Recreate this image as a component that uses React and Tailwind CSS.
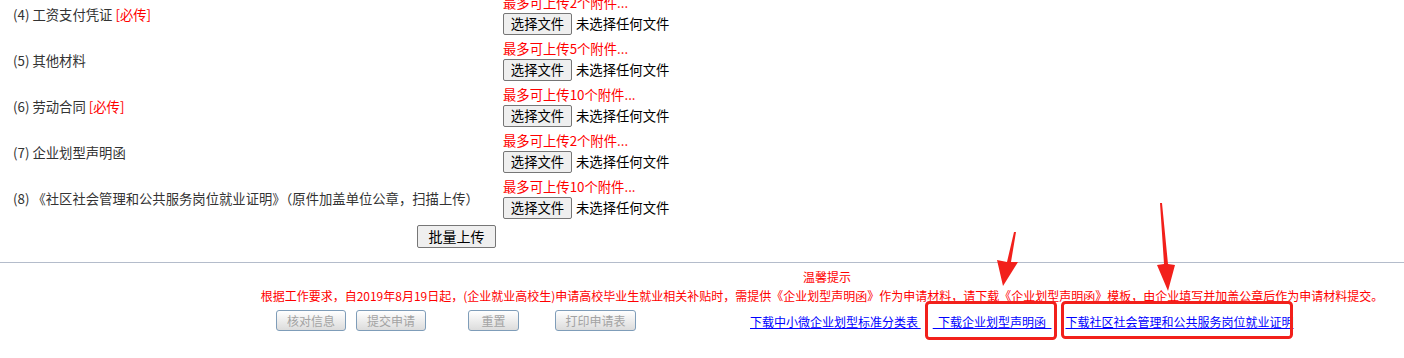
import React from 'react';

const rows = [
  { no: '(4)', label: '工资支付凭证', required: true, max: 2 },
  { no: '(5)', label: '其他材料', required: false, max: 5 },
  { no: '(6)', label: '劳动合同', required: true, max: 10 },
  { no: '(7)', label: '企业划型声明函', required: false, max: 2 },
  { no: '(8)', label: '《社区社会管理和公共服务岗位就业证明》（原件加盖单位公章，扫描上传）', required: false, max: 10 },
];

const FileRow = ({ row }) => (
  <div className="flex h-[46px] items-center">
    <div className="w-[503px] pl-[13px] text-[13.33px] text-[#333]">
      {row.no} {row.label}
      {row.required && <span className="text-[#ff0000]"> [必传]</span>}
    </div>
    <div className="flex flex-col">
      <div className="h-[16px] text-[13.33px] leading-[16px] text-[#ff0000]">最多可上传{row.max}个附件...</div>
      <div className="mt-[2px] flex items-center">
        <span className="flex h-[22px] w-[69px] items-center justify-center rounded-[2px] border border-[#767676] bg-[#efefef] text-[13.33px] text-black">
          选择文件
        </span>
        <span className="ml-[4px] text-[13.33px] text-black">未选择任何文件</span>
      </div>
    </div>
  </div>
);

const GrayButton = ({ children, className }) => (
  <span
    className={`flex h-[21px] items-center justify-center rounded-[3px] border border-[#7f9db9] bg-gradient-to-b from-white to-[#dcdcdc] text-[12px] text-[#a3a3a3] ${className}`}
  >
    {children}
  </span>
);

export default function App() {
  return (
    <div className="relative h-[358px] w-[1404px] overflow-hidden bg-white font-['Noto_Sans_CJK_SC','Microsoft_YaHei',sans-serif]">
      <div className="-mt-[8px]">
        {rows.map((row) => (
          <FileRow key={row.no} row={row} />
        ))}
      </div>

      <div className="mt-[3px] flex w-[913px] justify-center">
        <span className="flex h-[23px] w-[79px] items-center justify-center rounded-[2px] border border-[#767676] bg-[#efefef] text-[14px] text-black">
          批量上传
        </span>
      </div>

      <div className="mt-[14px] h-px w-full bg-[#b4bccb]" />

      <div className="ml-[240px] text-center">
        <div className="mt-[6px] pl-[10px] text-[12px] leading-[16px] text-[#ff0000]">温馨提示</div>
        <div className="mt-[3px] text-[12px] leading-[16px] text-[#ff0000]">
          根据工作要求，自2019年8月19日起，(企业就业高校生)申请高校毕业生就业相关补贴时，需提供《企业划型声明函》作为申请材料，请下载《企业划型声明函》模板，由企业填写并加盖公章后作为申请材料提交。
        </div>
      </div>

      <div className="mt-[6px] flex items-center">
        <div className="ml-[276px] flex items-center">
          <GrayButton className="w-[70px]">核对信息</GrayButton>
          <GrayButton className="ml-[10px] w-[70px]">提交申请</GrayButton>
          <GrayButton className="ml-[42px] w-[51px]">重置</GrayButton>
          <GrayButton className="ml-[36px] w-[81px]">打印申请表</GrayButton>
        </div>
        <div className="ml-[114px] mt-[3px] flex text-[12px] text-[#0000ff]">
          <a className="underline whitespace-pre">下载中小微企业划型标准分类表 </a>
          <a className="ml-[12px] underline whitespace-pre">  下载企业划型声明函  </a>
          <a className="ml-[14px] underline whitespace-pre">下载社区社会管理和公共服务岗位就业证明</a>
        </div>
      </div>

      <svg className="pointer-events-none absolute inset-0" width="1404" height="358" viewBox="0 0 1404 358">
        <rect x="926.5" y="302.5" width="129" height="36" rx="3" fill="none" stroke="#f2201b" strokeWidth="3" />
        <rect x="1062.5" y="302.5" width="229" height="35" rx="3" fill="none" stroke="#f2201b" strokeWidth="3" />
        <polygon points="1014,232 1016,232 1011,262 1018,262 1003,286 997,260 1007,262" fill="#f2201b" />
        <polygon points="1160,203 1162,203 1168,264 1175,265 1168,291 1157,265 1164,264" fill="#f2201b" />
      </svg>
    </div>
  );
}
